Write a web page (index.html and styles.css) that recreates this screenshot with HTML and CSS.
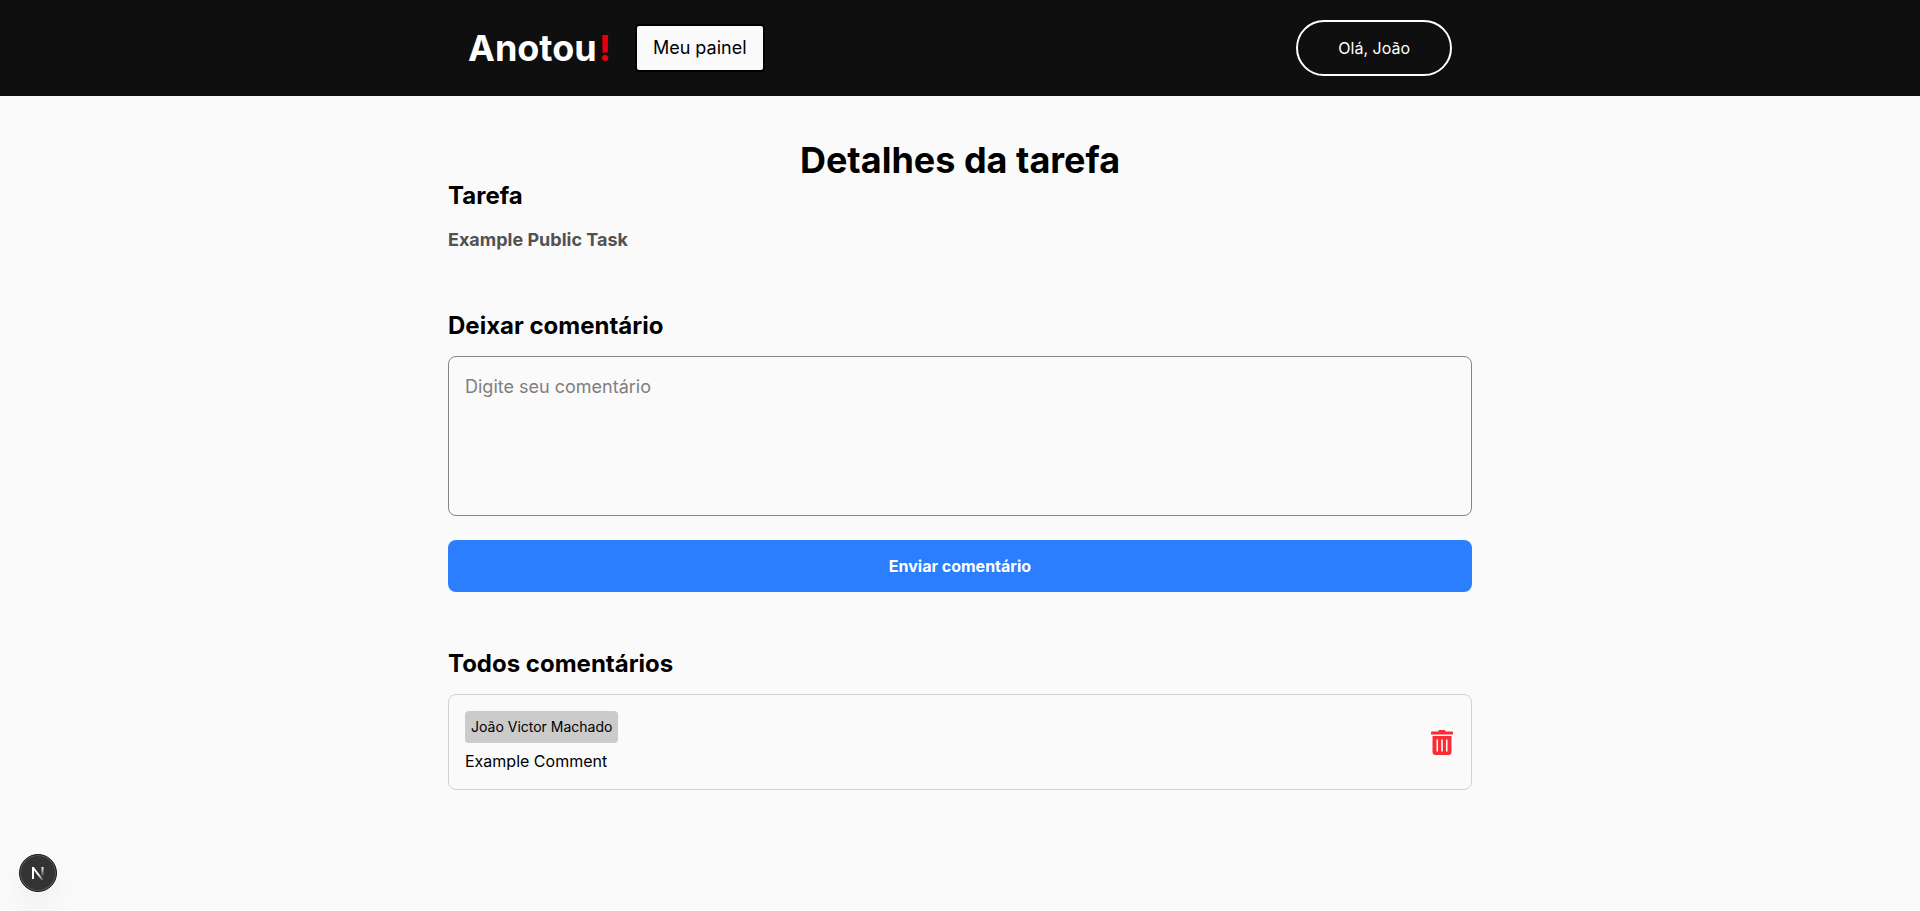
FILE: index.html
```html
<!DOCTYPE html>
<html lang="pt-BR">
<head>
<meta charset="utf-8">
<meta name="viewport" content="width=device-width, initial-scale=1">
<title>Detalhes da tarefa</title>
<link rel="stylesheet" href="styles.css">
</head>
<body>
<header class="header">
  <div class="header-inner">
    <nav class="nav">
      <a class="logo" href="#">Anotou<span class="logo-mark">!</span></a>
      <a class="panel-link" href="#">Meu painel</a>
    </nav>
    <button class="user-button" type="button">Olá, João</button>
  </div>
</header>
<main class="main">
  <h1 class="title">Detalhes da tarefa</h1>
  <section class="section">
    <h2 class="heading">Tarefa</h2>
    <p class="task">Example Public Task</p>
  </section>
  <section class="section">
    <h2 class="heading"><label for="comment">Deixar comentário</label></h2>
    <form class="form">
      <textarea class="comment-input" id="comment" placeholder="Digite seu comentário"></textarea>
      <button class="submit" type="submit">Enviar comentário</button>
    </form>
  </section>
  <section class="section">
    <h2 class="heading">Todos comentários</h2>
    <article class="comment">
      <div class="comment-body">
        <span class="author">João Victor Machado</span>
        <p class="comment-text">Example Comment</p>
      </div>
      <button class="delete" type="button" aria-label="Excluir comentário">
        <svg viewBox="0 0 25 26" width="25" height="26" fill="currentColor" aria-hidden="true">
          <path d="M8.500 2.600V2.200Q8.500 1 9.700 1h4.600Q15.500 1 15.500 2.200V2.600h6.500q1 0 1 1V5.500H1V3.600q0-1 1-1z"/>
          <path fill-rule="evenodd" d="M2.500 7h19v16q0 3-3 3h-13q-3 0-3-3zM6.500 10.500v12H8v-12zM11.200 10.500v12h1.600v-12zM16 10.500v12h1.500v-12z"/>
        </svg>
      </button>
    </article>
  </section>
</main>
<button class="dev-badge" type="button" aria-label="Next.js">
  <svg viewBox="0 0 40 40" width="40" height="40" fill="none" aria-hidden="true">
    <defs>
      <linearGradient id="diag" x1="21" y1="21" x2="26" y2="28" gradientUnits="userSpaceOnUse"><stop stop-color="#fff"/><stop offset="1" stop-color="#fff" stop-opacity="0"/></linearGradient>
      <linearGradient id="stem" x1="25" y1="14" x2="25" y2="24" gradientUnits="userSpaceOnUse"><stop stop-color="#fff"/><stop offset="1" stop-color="#fff" stop-opacity="0"/></linearGradient>
    </defs>
    <path d="M15 14.500L24.500 27" stroke="url(#diag)" stroke-width="2"/>
    <path d="M15 26V14" stroke="#fff" stroke-width="2"/>
    <path d="M24.500 14V24" stroke="url(#stem)" stroke-width="2"/>
  </svg>
</button>
</body>
</html>
```
FILE: styles.css
```css
*, *::before, *::after { box-sizing: border-box; margin: 0; padding: 0; }

body {
  min-height: 100vh;
  background: #fafafa;
  color: #000;
  font-family: Inter, "Liberation Sans", sans-serif;
  font-size: 16px;
  line-height: 24px;
}

a { color: inherit; text-decoration: none; }
button, textarea { font: inherit; }
button { cursor: pointer; }

.header {
  display: flex;
  justify-content: center;
  align-items: center;
  height: 96px;
  background: #0f0f0f;
}

.header-inner {
  display: flex;
  justify-content: space-between;
  align-items: center;
  width: 100%;
  max-width: 1024px;
  padding: 0 20px;
}

.nav { display: flex; align-items: center; gap: 24px; }

.logo { color: #fff; font-size: 36px; font-weight: 700; line-height: 40px; }
.logo-mark { padding-left: 2px; color: #e7000b; }

.panel-link {
  padding: 8px 16px;
  border: 2px solid #000;
  border-radius: 4px;
  background: #fafafa;
  font-size: 18px;
  line-height: 28px;
}

.user-button {
  padding: 14px 40px;
  border: 2px solid #fff;
  border-radius: 28px;
  background: transparent;
  color: #fff;
}

.main {
  display: flex;
  flex-direction: column;
  gap: 56px;
  width: 100%;
  max-width: 1024px;
  margin: 44px auto 0;
}

.title { margin-bottom: -56px; font-size: 36px; line-height: 40px; text-align: center; }
.section { display: flex; flex-direction: column; gap: 14px; }
.heading { font-size: 24px; line-height: 32px; }
.task { color: #525252; font-size: 18px; font-weight: 700; line-height: 28px; }
.form { display: flex; flex-direction: column; gap: 24px; }

.comment-input {
  width: 100%;
  height: 160px;
  padding: 16px;
  border: 1px solid #858585;
  border-radius: 8px;
  background: transparent;
  font-size: 18px;
  line-height: 28px;
  resize: none;
}
.comment-input::placeholder { color: #7f7f7f; }

.submit {
  padding: 14px;
  border: 0;
  border-radius: 8px;
  background: #2b7fff;
  color: #fff;
  font-weight: 700;
}

.comment {
  display: flex;
  justify-content: space-between;
  align-items: center;
  padding: 16px;
  border: 1px solid #d1d1d1;
  border-radius: 8px;
}

.comment-body { display: flex; flex-direction: column; align-items: flex-start; gap: 6px; }
.author { padding: 6px; border-radius: 4px; background: #cbcbcb; font-size: 14px; line-height: 20px; }
.delete { display: flex; border: 0; background: transparent; color: #fb2c36; }

.dev-badge {
  position: fixed;
  bottom: 19px;
  left: 19px;
  display: flex;
  justify-content: center;
  align-items: center;
  width: 38px;
  height: 38px;
  border: 1px solid #171717;
  border-radius: 50%;
  background: #333;
  box-shadow: inset 0 0 0 1px #5c5c5c, 0 16px 32px -8px rgba(0, 0, 0, 0.14);
}
.dev-badge svg { flex: none; }
```
